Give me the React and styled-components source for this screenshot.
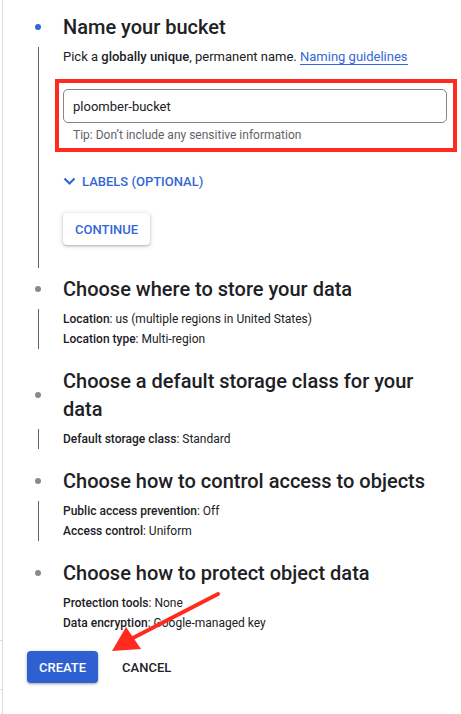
import React from "react";
import styled, { createGlobalStyle } from "styled-components";

const Global = createGlobalStyle`
  html, body { margin: 0; padding: 0; background: #fff; }
  body { font-family: Roboto, "Liberation Sans", Arial, sans-serif; color: #202124; }
`;

const Page = styled.div`
  position: relative;
  margin-left: 2px;
  min-height: 714px;
  box-sizing: border-box;
  border-left: 1px solid #dadce0;
  padding: 13px 14px 0 24px;
  &::before, &::after {
    content: "";
    position: absolute;
    left: -3px;
    width: 3px;
    height: 1px;
    background: #dadce0;
  }
  &::before { top: 640px; }
  &::after { top: 689px; }
`;

const Step = styled.section`
  margin-bottom: ${(p) => (p.$active ? 7 : 18)}px;
`;

const Header = styled.div`
  display: grid;
  grid-template-columns: 22px 1fr;
  column-gap: 14px;
  align-items: center;
`;

const Dot = styled.span`
  justify-self: center;
  width: 6px;
  height: 6px;
  border-radius: 50%;
  background: ${(p) => (p.$active ? "#3367d6" : "#8a8a8a")};
`;

const Title = styled.h2`
  margin: 0;
  font-size: 20px;
  line-height: 28px;
  font-weight: 500;
  color: #202124;
`;

const Body = styled.div`
  display: grid;
  grid-template-columns: 22px 1fr;
  column-gap: 14px;
  margin-top: 6px;
`;

const Rail = styled.span`
  justify-self: center;
  width: 1px;
  background: ${(p) => (p.$hidden ? "transparent" : "#5f6368")};
`;

const Content = styled.div`
  padding-bottom: ${(p) => (p.$active ? 23 : 0)}px;
`;

const Intro = styled.p`
  margin: 0;
  font-size: 13px;
  line-height: 20px;
  white-space: nowrap;
  b { font-weight: 500; }
`;

const Link = styled.a`
  color: #3367d6;
  text-decoration: none;
  border-bottom: 1px solid #3367d6;
`;

const Highlight = styled.div`
  margin: 12px -10px 0 -8px;
  border: 4px solid #ff2b1e;
  padding: 6px 6px 5px 4px;
`;

const Input = styled.div`
  box-sizing: border-box;
  height: 34px;
  border: 1px solid #80868b;
  border-radius: 5px;
  padding: 0 9px;
  display: flex;
  align-items: center;
  font-size: 13px;
  color: #202124;
`;

const Hint = styled.div`
  margin-top: 4px;
  padding-left: 10px;
  font-size: 12px;
  line-height: 16px;
  color: #5f6368;
`;

const Toggle = styled.div`
  margin-top: 17px;
  display: flex;
  align-items: center;
  gap: 6px;
  height: 24px;
  color: #3367d6;
  font-size: 13px;
  font-weight: 500;
`;

const RaisedButton = styled.button`
  margin-top: 20px;
  height: 32px;
  padding: 0 12px;
  border: none;
  border-radius: 4px;
  background: #fff;
  color: #3367d6;
  font-family: inherit;
  font-size: 13px;
  font-weight: 500;
  box-shadow: 0 1px 2px rgba(60, 64, 67, 0.3), 0 1px 4px 1px rgba(60, 64, 67, 0.15);
`;

const Line = styled.div`
  font-size: 12px;
  line-height: 20px;
  color: #202124;
  b { font-weight: 500; }
`;

const Footer = styled.div`
  display: flex;
  align-items: center;
  gap: 8px;
  margin-top: 6px;
`;

const Primary = styled.button`
  height: 32px;
  padding: 0 12px;
  border: none;
  border-radius: 4px;
  background: #2f60d2;
  color: #fff;
  font-family: inherit;
  font-size: 13px;
  font-weight: 500;
  box-shadow: 0 1px 2px rgba(60, 64, 67, 0.3), 0 1px 3px 1px rgba(60, 64, 67, 0.15);
`;

const TextButton = styled.button`
  height: 32px;
  padding: 0 16px;
  border: none;
  background: transparent;
  color: #202124;
  font-family: inherit;
  font-size: 13px;
  font-weight: 500;
`;

const Arrow = styled.svg`
  position: absolute;
  left: 100px;
  top: 585px;
  width: 125px;
  height: 75px;
  overflow: visible;
`;

const Chevron = () => (
  <svg width="13" height="9" viewBox="0 0 13 9">
    <path d="M1.5 1.5 L6.5 6.5 L11.5 1.5" fill="none" stroke="#3367d6" strokeWidth="2.2" />
  </svg>
);

const steps = [
  {
    title: "Choose where to store your data",
    lines: [
      ["Location", "us (multiple regions in United States)"],
      ["Location type", "Multi-region"],
    ],
  },
  { title: "Choose a default storage class for your data", lines: [["Default storage class", "Standard"]] },
  {
    title: "Choose how to control access to objects",
    lines: [
      ["Public access prevention", "Off"],
      ["Access control", "Uniform"],
    ],
  },
  {
    title: "Choose how to protect object data",
    lines: [
      ["Protection tools", "None"],
      ["Data encryption", "Google-managed key"],
    ],
    last: true,
  },
];

export default function App() {
  return (
    <>
      <Global />
      <Page>
        <Step $active>
          <Header>
            <Dot $active />
            <Title>Name your bucket</Title>
          </Header>
          <Body>
            <Rail />
            <Content $active>
              <Intro>
                Pick a <b>globally unique</b>, permanent name. <Link href="#">Naming guidelines</Link>
              </Intro>
              <Highlight>
                <Input>ploomber-bucket</Input>
                <Hint>Tip: Don’t include any sensitive information</Hint>
              </Highlight>
              <Toggle>
                <Chevron />
                LABELS (OPTIONAL)
              </Toggle>
              <RaisedButton>CONTINUE</RaisedButton>
            </Content>
          </Body>
        </Step>
        {steps.map((s) => (
          <Step key={s.title}>
            <Header>
              <Dot />
              <Title>{s.title}</Title>
            </Header>
            <Body>
              <Rail $hidden={s.last} />
              <Content>
                {s.lines.map(([k, v]) => (
                  <Line key={k}>
                    <b>{k}</b>: {v}
                  </Line>
                ))}
              </Content>
            </Body>
          </Step>
        ))}
        <Footer>
          <Primary>CREATE</Primary>
          <TextButton>CANCEL</TextButton>
        </Footer>
        <Arrow viewBox="100 585 125 75">
          <line x1="215" y1="594" x2="126" y2="640" stroke="#ff2b1e" strokeWidth="4" strokeLinecap="round" />
          <polygon points="109,651 138,649 123,627" fill="#ff2b1e" />
        </Arrow>
      </Page>
    </>
  );
}
